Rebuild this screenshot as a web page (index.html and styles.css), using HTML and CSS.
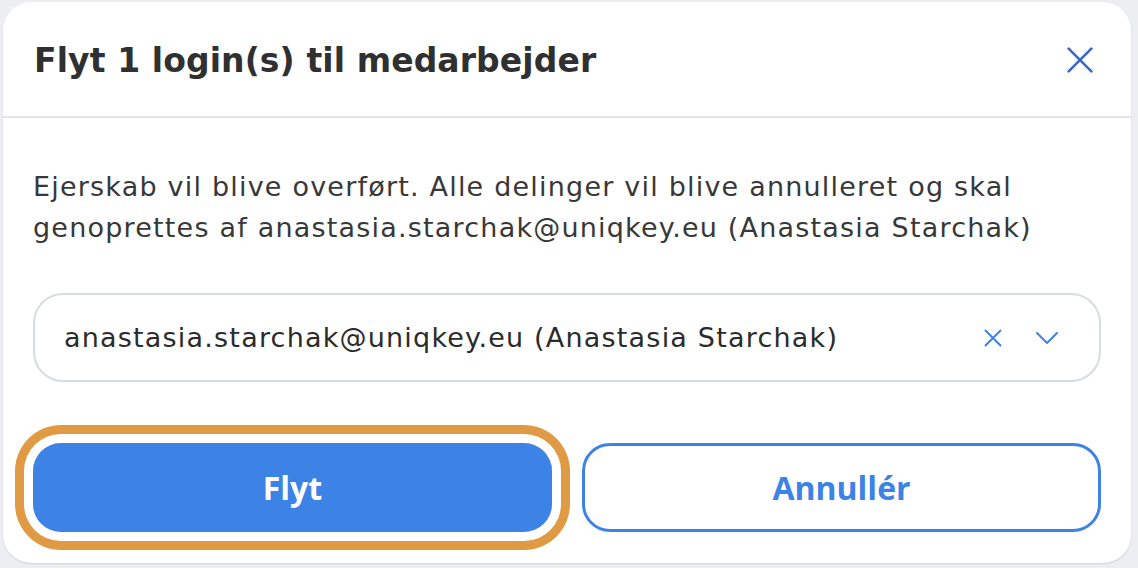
FILE: index.html
```html
<!DOCTYPE html>
<html lang="da">
<head>
<meta charset="utf-8">
<title>Flyt login</title>
<link rel="stylesheet" href="styles.css">
</head>
<body>
<div class="modal">
  <header class="modal-header">
    <h1 class="title">Flyt 1 login(s) til medarbejder</h1>
    <button class="close" aria-label="Luk">
      <svg viewBox="0 0 24 24" width="26" height="26"><path d="M1.5 1.5 L22.5 22.5 M22.5 1.5 L1.5 22.5" stroke="currentColor" stroke-width="2.4" stroke-linecap="round" fill="none"/></svg>
    </button>
  </header>
  <div class="modal-body">
    <p class="message">Ejerskab vil blive overført. Alle delinger vil blive annulleret og skal genoprettes af anastasia.starchak@uniqkey.eu (Anastasia Starchak)</p>
    <div class="select">
      <span class="select-value">anastasia.starchak@uniqkey.eu (Anastasia Starchak)</span>
      <span class="select-icons">
        <svg class="ico-clear" viewBox="0 0 18 18" width="18" height="18"><path d="M1.5 1.5 L16.5 16.5 M16.5 1.5 L1.5 16.5" stroke="currentColor" stroke-width="2" stroke-linecap="round" fill="none"/></svg>
        <svg class="ico-chev" viewBox="0 0 24 14" width="24" height="14"><path d="M2 2 L12 12 L22 2" stroke="currentColor" stroke-width="2" stroke-linecap="round" stroke-linejoin="round" fill="none"/></svg>
      </span>
    </div>
    <div class="actions">
      <div class="focus-ring"><button class="btn btn-primary">Flyt</button></div>
      <button class="btn btn-outline">Annullér</button>
    </div>
  </div>
</div>
</body>
</html>
```

FILE: styles.css
```css
html, body {
  margin: 0;
  padding: 0;
}
body {
  background: #eceef2;
  width: 1138px;
  height: 568px;
  overflow: hidden;
  font-family: "DejaVu Sans", "Liberation Sans", sans-serif;
}
.modal {
  margin: 2px 0 0 3px;
  width: 1128px;
  height: 561px;
  box-sizing: border-box;
  background: #ffffff;
  border-radius: 28px;
  box-shadow: 0 1px 2px rgba(0,0,0,0.12);
  display: flex;
  flex-direction: column;
}
.modal-header {
  height: 116px;
  box-sizing: border-box;
  border-bottom: 2px solid #e3e4e6;
  display: flex;
  align-items: center;
  justify-content: space-between;
  padding: 2px 38px 0 31px;
}
.title {
  margin: 0;
  font-size: 33px;
  font-weight: 700;
  color: #303030;
  letter-spacing: 0.1px;
}
.close {
  border: 0;
  background: none;
  padding: 0;
  color: #3b66c8;
  display: flex;
}
.modal-body {
  padding: 48px 30px 0 30px;
}
.message {
  margin: 0;
  font-size: 27px;
  line-height: 41px;
  letter-spacing: 1.2px;
  color: #383838;
}
.select {
  margin-top: 45px;
  height: 89px;
  box-sizing: border-box;
  border: 2px solid #d7dce1;
  border-radius: 30px;
  display: flex;
  align-items: center;
  justify-content: space-between;
  padding: 0 40px 0 29px;
}
.select-value {
  font-size: 27px;
  letter-spacing: 1.2px;
  color: #2b2b2b;
}
.select-icons {
  display: flex;
  align-items: center;
  gap: 33px;
  color: #3d83e6;
}
.actions {
  margin-top: 61px;
  display: grid;
  grid-template-columns: 1fr 1fr;
  gap: 30px;
}
.focus-ring {
  border-radius: 28px;
  box-shadow: 0 0 0 9px #ffffff, 0 0 0 18px #e09a44;
  display: flex;
}
.btn {
  height: 89px;
  width: 100%;
  border-radius: 28px;
  font-family: "Open Sans", "Liberation Sans", sans-serif;
  font-weight: 700;
  font-size: 32px;
  cursor: pointer;
}
.btn-primary {
  background: #3d83e6;
  color: #ffffff;
  border: 0;
}
.btn-outline {
  background: #ffffff;
  color: #3d83e6;
  border: 3px solid #3d83e6;
}
```
